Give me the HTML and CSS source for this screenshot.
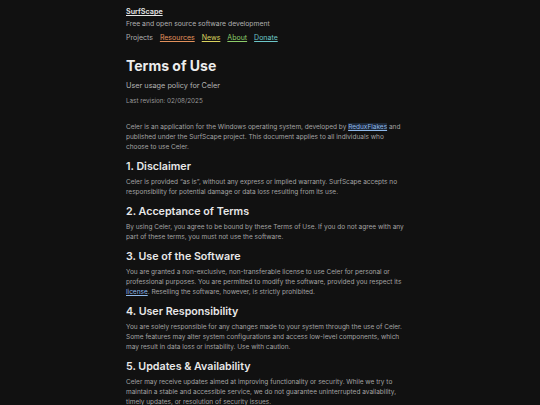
FILE: index.html
```html
<!DOCTYPE html>
<html lang="en">
<head>
    <meta charset="UTF-8">
    <meta name="viewport" content="width=device-width, initial-scale=1.0">
    <title>Terms of Use - Celer</title>
    <link rel="stylesheet" href="styles.css">
</head>
<body>
    <div class="container">
        <header>
            <a class="brand" href="#">SurfScape</a>
            <p class="tagline">Free and open source software development</p>
            <nav>
                <span class="current">Projects</span>
                <a class="orange" href="#">Resources</a>
                <a class="yellow" href="#">News</a>
                <a class="green" href="#">About</a>
                <a class="teal" href="#">Donate</a>
            </nav>
        </header>
        <main>
            <h1>Terms of Use</h1>
            <p class="lead">User usage policy for Celer</p>
            <p class="revision">Last revision: 02/08/2025</p>

            <p class="intro">Celer is an application for the Windows operating system, developed by <a class="hl" href="#">ReduxFlakes</a> and published under the SurfScape project. This document applies to all individuals who<br>choose to use Celer.</p>

            <h2>1. Disclaimer</h2>
            <p>Celer is provided “as is”, without any express or implied warranty. SurfScape accepts no responsibility for potential damage or data loss resulting from its use.</p>

            <h2>2. Acceptance of Terms</h2>
            <p>By using Celer, you agree to be bound by these Terms of Use. If you do not agree with any part of these terms, you must not use the software.</p>

            <h2>3. Use of the Software</h2>
            <p>You are granted a non-exclusive, non-transferable license to use Celer for personal or professional purposes. You are permitted to modify the software, provided you respect its <a href="#">license</a>. Reselling the software, however, is strictly prohibited.</p>

            <h2>4. User Responsibility</h2>
            <p>You are solely responsible for any changes made to your system through the use of Celer. Some features may alter system configurations and access low-level components, which<br>may result in data loss or instability. Use with caution.</p>

            <h2>5. Updates &amp; Availability</h2>
            <p>Celer may receive updates aimed at improving functionality or security. While we try to maintain a stable and accessible service, we do not guarantee uninterrupted availability, timely updates, or resolution of security issues.</p>
        </main>
    </div>
</body>
</html>
```

FILE: styles.css
```css
body {
    font-family: 'Inter', 'Noto Sans', sans-serif;
    background-color: #111111;
    color: #a4a4a4;
    margin: 0;
    padding: 0;
}
.container {
    width: 288px;
    margin: 0 auto;
    padding-top: 7px;
}
header {
    display: flex;
    flex-direction: column;
    align-items: flex-start;
}
header .brand {
    color: #e6e6e6;
    font-size: 7.2px;
    font-weight: 600;
    line-height: 10px;
}
.tagline {
    margin: 2px 0 0;
    font-size: 6.8px;
    line-height: 10px;
    color: #b0b0b0;
}
nav {
    margin-top: 4px;
    display: flex;
    gap: 7px;
    font-size: 7px;
    line-height: 10px;
}
nav .current {
    color: #b0b0b0;
}
nav a {
    text-decoration: underline;
}
nav .orange { color: #e2915c; }
nav .yellow { color: #d9d25e; }
nav .green { color: #8ccc6a; }
nav .teal { color: #6cc6c8; }
h1 {
    color: #ececec;
    font-size: 14px;
    font-weight: 700;
    line-height: 18px;
    margin: 14px 0 0;
}
.lead {
    margin: 5px 0 0;
    font-size: 7.3px;
    line-height: 12px;
    color: #b4b4b4;
}
.revision {
    margin: 4px 0 0;
    font-size: 6.3px;
    line-height: 10px;
    color: #9a9a9a;
}
main p {
    font-size: 6.5px;
    line-height: 10px;
    margin: 0;
}
main .intro {
    margin: 16px 0 1px;
}
h2 {
    color: #e8e8e8;
    font-size: 10.7px;
    font-weight: 600;
    line-height: 16px;
    margin: 7px 0 2px;
}
main a {
    color: #8fb8ea;
    text-decoration: underline;
}
main a.hl {
    background-color: #1c2838;
}
```
